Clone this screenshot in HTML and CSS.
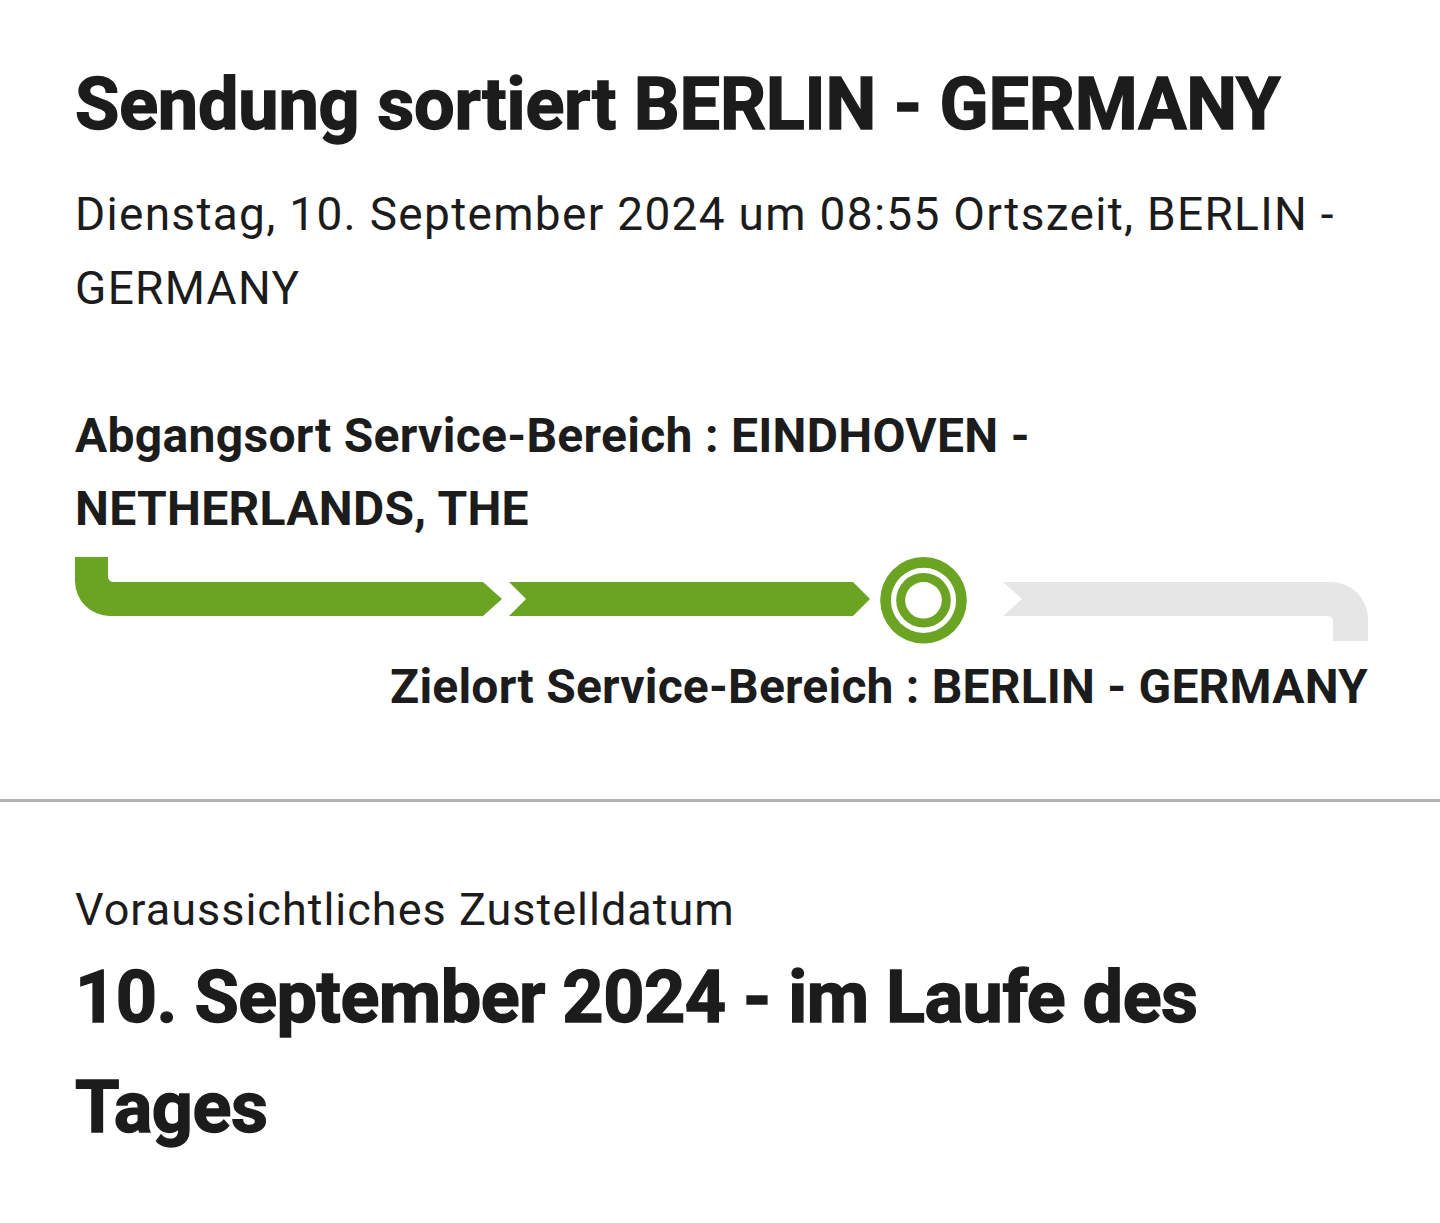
FILE: index.html
```html
<!DOCTYPE html>
<html lang="de">
<head>
<meta charset="utf-8">
<title>Sendungsverfolgung</title>
<link rel="stylesheet" href="styles.css">
</head>
<body>
<main class="page">
  <section class="event">
    <h1 class="headline">Sendung sortiert BERLIN - GERMANY</h1>
    <p class="timestamp">Dienstag, 10. September 2024 um 08:55 Ortszeit, BERLIN - GERMANY</p>
    <p class="origin">Abgangsort Service-Bereich : EINDHOVEN - NETHERLANDS, THE</p>
    <svg class="progress" width="1295" height="87" viewBox="0 0 1295 87" aria-hidden="true">
      <path class="done" d="M0,0 H33 V19 Q33,25 39,25 H408 L427,42 L408,59 H35 A35,35 0 0 1 0,24 Z"/>
      <path class="done" d="M434,25 H778 L795,42 L778,59 H434 L451,42 Z"/>
      <circle class="done" cx="848.5" cy="43.3" r="43.3"/>
      <circle class="hole" cx="848.5" cy="43.3" r="32.6"/>
      <circle class="done" cx="848.5" cy="43.3" r="27.3"/>
      <circle class="hole" cx="848.5" cy="43.3" r="18.3"/>
      <path class="todo" d="M928,25 H1256 A37,37 0 0 1 1293,62 V84 H1258 V65 Q1258,59 1252,59 H928 L947,42 Z"/>
    </svg>
    <p class="destination">Zielort Service-Bereich : BERLIN - GERMANY</p>
  </section>
  <hr class="divider">
  <section class="delivery">
    <p class="delivery-label">Voraussichtliches Zustelldatum</p>
    <h2 class="headline delivery-date">10. September 2024 - im Laufe des Tages</h2>
  </section>
</main>
</body>
</html>
```
FILE: styles.css
```css
html, body {
  margin: 0;
  padding: 0;
  background: #ffffff;
}

body {
  font-family: Roboto, "Liberation Sans", sans-serif;
  color: #1c1c1c;
}

.page {
  display: flex;
  flex-direction: column;
}

.event,
.delivery {
  padding: 0 75px;
  display: flex;
  flex-direction: column;
}

.headline {
  font-family: Roboto, "Liberation Sans", sans-serif;
  font-weight: 700;
  font-size: 72px;
  line-height: 86px;
  margin: 0;
  letter-spacing: -0.5px;
  -webkit-text-stroke: 1.4px #1c1c1c;
}

.event .headline {
  margin-top: 62px;
  letter-spacing: -0.2px;
}

.timestamp {
  font-size: 46px;
  line-height: 74px;
  margin: 29px 0 0;
  letter-spacing: 1.3px;
  max-width: 1290px;
}

.origin {
  font-weight: 700;
  font-size: 48px;
  line-height: 73px;
  letter-spacing: 0.3px;
  margin: 74px 0 0;
  max-width: 1000px;
}

.progress {
  display: block;
  margin-top: 12px;
}

.progress .done { fill: #6ba323; }
.progress .hole { fill: #ffffff; }
.progress .todo { fill: #e6e6e6; }

.destination {
  font-weight: 700;
  font-size: 48px;
  line-height: 73px;
  letter-spacing: 0.2px;
  margin: 6px 0 0;
  align-self: flex-end;
  margin-right: -3px;
}

.divider {
  border: 0;
  height: 3px;
  background: #b3b3b3;
  margin: 76px 0 0;
  width: 100%;
}

.delivery-label {
  font-size: 45px;
  line-height: 60px;
  letter-spacing: 1px;
  margin: 78px 0 0;
}

.delivery-date {
  line-height: 110px;
  margin-top: 3px;
  max-width: 1290px;
}
```
